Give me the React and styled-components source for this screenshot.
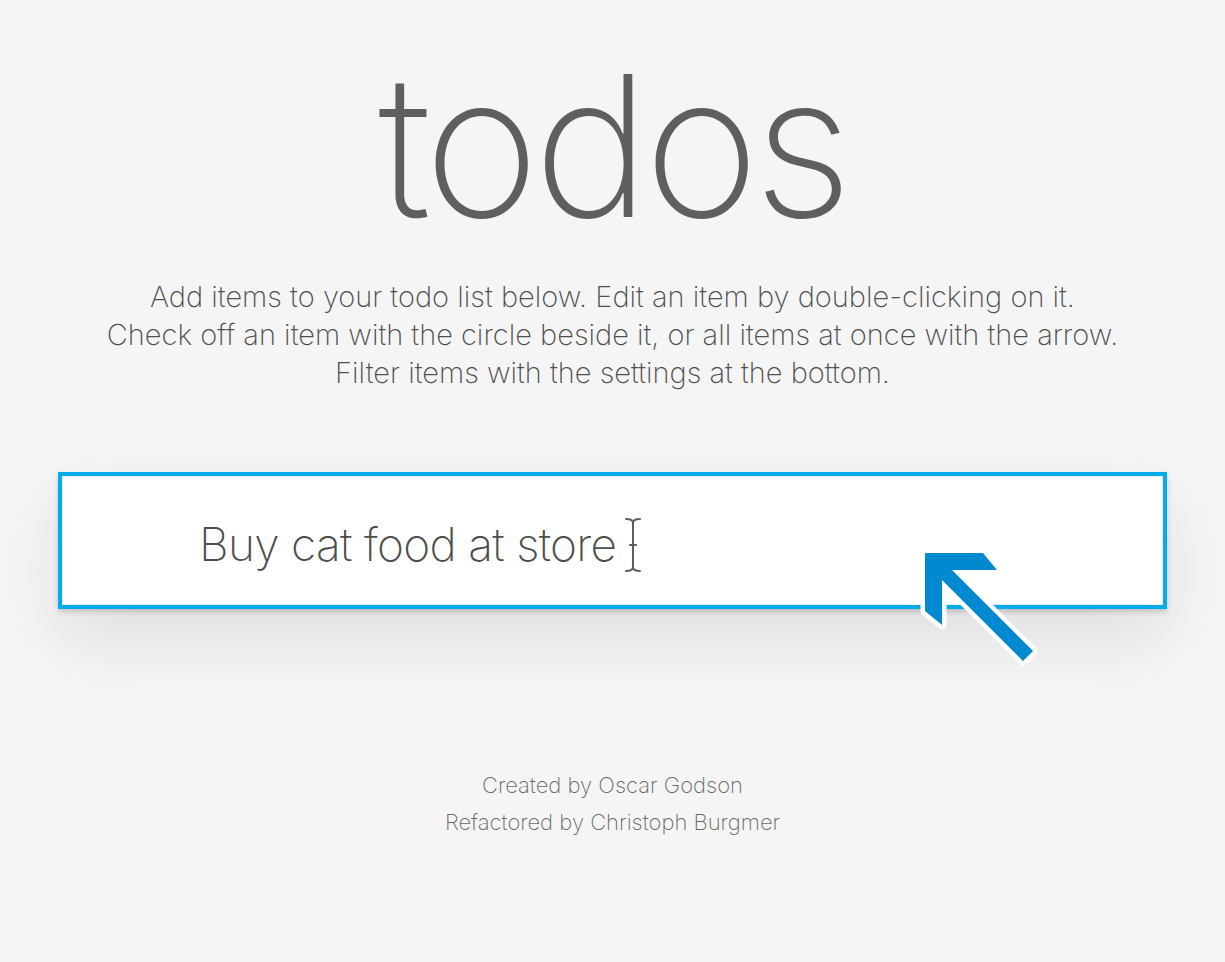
import React from "react";
import styled, { createGlobalStyle } from "styled-components";

const GlobalStyle = createGlobalStyle`
  html, body {
    margin: 0;
    padding: 0;
    background: #f5f5f5;
  }
  body {
    font-family: Inter, "Helvetica Neue", "Liberation Sans", sans-serif;
    font-weight: 200;
    color: #4d4d4d;
    -webkit-font-smoothing: antialiased;
  }
`;

const Page = styled.div`
  min-height: 962px;
  display: flex;
  flex-direction: column;
  align-items: center;
  padding-top: 46px;
  box-sizing: border-box;
`;

const Title = styled.h1`
  margin: 0;
  font-size: 197px;
  line-height: 200px;
  font-weight: 170;
  color: #5f5f5f;
  letter-spacing: -6px;
`;

const Intro = styled.p`
  margin: 32px 0 0;
  font-size: 29px;
  line-height: 38px;
  font-weight: 200;
  color: #4f4f4f;
  text-align: center;
`;

const Card = styled.div`
  position: relative;
  margin-top: 80px;
  width: 1109px;
  height: 137px;
  box-sizing: border-box;
  border: 4px solid #00adea;
  background: #fff;
  box-shadow: inset 0 0 0 1px #ececec, 0 3px 5px rgba(0, 0, 0, 0.16),
    0 30px 70px rgba(0, 0, 0, 0.09);
  display: flex;
  align-items: center;
`;

const TodoInput = styled.input`
  flex: 1;
  border: none;
  outline: none;
  background: transparent;
  margin: 6px 0 0 137px;
  padding: 0;
  font-family: inherit;
  font-size: 46px;
  font-weight: 200;
  letter-spacing: -0.7px;
  color: #4d4d4d;
`;

const Caret = styled.svg`
  position: absolute;
  left: 561px;
  top: 41px;
  width: 20px;
  height: 56px;
`;

const Pointer = styled.svg`
  position: absolute;
  left: 853px;
  top: 67px;
  width: 130px;
  height: 130px;
  overflow: visible;
`;

const Footer = styled.footer`
  margin-top: 158px;
  text-align: center;
  font-size: 22px;
  line-height: 37px;
  font-weight: 200;
  color: #6a6a6a;
`;

const FooterLine = styled.p`
  margin: 0;
`;

export default function App() {
  return (
    <>
      <GlobalStyle />
      <Page>
        <Title>todos</Title>
        <Intro>
          Add items to your todo list below. Edit an item by double-clicking on it.
          <br />
          Check off an item with the circle beside it, or all items at once with the arrow.
          <br />
          Filter items with the settings at the bottom.
        </Intro>
        <Card>
          <TodoInput defaultValue="Buy cat food at store" readOnly />
          <Caret viewBox="0 0 20 56">
            <g fill="none" stroke="#5a5f66" strokeWidth="2" strokeLinecap="round">
              <path d="M3 2c4 0 7 1 7 4v44c0 3-3 4-7 4" />
              <path d="M17 2c-4 0-7 1-7 4M17 54c-4 0-7-1-7-4" />
              <path d="M7 28h6" />
            </g>
          </Caret>
          <Pointer viewBox="0 0 130 130">
            <polygon
              points="10,10 68,10 82,27 37,27 118,108 108,118 27,37 27,82 10,68"
              fill="#0089d0"
              stroke="#fff"
              strokeWidth="9"
              strokeLinejoin="round"
              paintOrder="stroke"
            />
          </Pointer>
        </Card>
        <Footer>
          <FooterLine>Created by Oscar Godson</FooterLine>
          <FooterLine>Refactored by Christoph Burgmer</FooterLine>
        </Footer>
      </Page>
    </>
  );
}
